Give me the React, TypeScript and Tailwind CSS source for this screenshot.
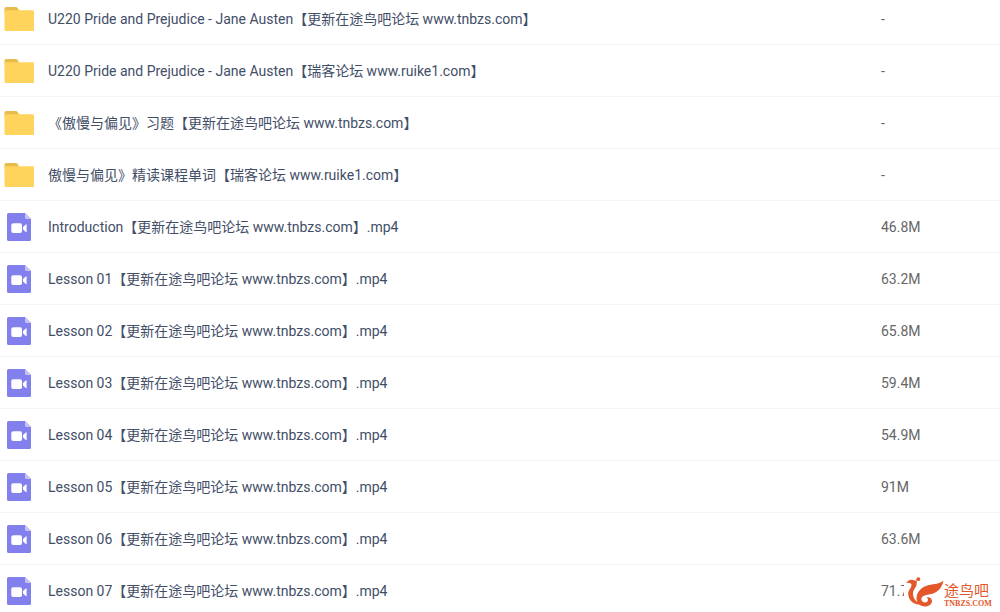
import React from 'react';

interface FileItem {
  name: string;
  size: string;
  type: 'folder' | 'video';
}

const files: FileItem[] = [
  { name: 'U220 Pride and Prejudice - Jane Austen【更新在途鸟吧论坛 www.tnbzs.com】', size: '-', type: 'folder' },
  { name: 'U220 Pride and Prejudice - Jane Austen【瑞客论坛 www.ruike1.com】', size: '-', type: 'folder' },
  { name: '《傲慢与偏见》习题【更新在途鸟吧论坛 www.tnbzs.com】', size: '-', type: 'folder' },
  { name: '傲慢与偏见》精读课程单词【瑞客论坛 www.ruike1.com】', size: '-', type: 'folder' },
  { name: 'Introduction【更新在途鸟吧论坛 www.tnbzs.com】.mp4', size: '46.8M', type: 'video' },
  { name: 'Lesson 01【更新在途鸟吧论坛 www.tnbzs.com】.mp4', size: '63.2M', type: 'video' },
  { name: 'Lesson 02【更新在途鸟吧论坛 www.tnbzs.com】.mp4', size: '65.8M', type: 'video' },
  { name: 'Lesson 03【更新在途鸟吧论坛 www.tnbzs.com】.mp4', size: '59.4M', type: 'video' },
  { name: 'Lesson 04【更新在途鸟吧论坛 www.tnbzs.com】.mp4', size: '54.9M', type: 'video' },
  { name: 'Lesson 05【更新在途鸟吧论坛 www.tnbzs.com】.mp4', size: '91M', type: 'video' },
  { name: 'Lesson 06【更新在途鸟吧论坛 www.tnbzs.com】.mp4', size: '63.6M', type: 'video' },
  { name: 'Lesson 07【更新在途鸟吧论坛 www.tnbzs.com】.mp4', size: '71.7M', type: 'video' },
];

const FolderIcon = () => (
  <svg className="w-[30px] h-[30px]" viewBox="0 0 30 30" aria-hidden="true">
    <path d="M.5 9V4.500A1.500 1.500 0 0 1 2 3H12a1.500 1.500 0 0 1 1.200.6L15 6v3z" fill="#e6bd4c" />
    <path d="M.5 7.500A1.200 1.200 0 0 1 1.700 6.300h27A1.500 1.500 0 0 1 30.200 7.800v17.700a1.500 1.500 0 0 1-1.500 1.500H2A1.500 1.500 0 0 1 .5 25.500z" fill="#ffd45c" />
  </svg>
);

const VideoIcon = () => (
  <svg className="w-[30px] h-[30px]" viewBox="0 0 30 30" aria-hidden="true">
    <path d="M4.500 1H21l6 6v20.500a1.500 1.500 0 0 1-1.500 1.500h-21A1.500 1.500 0 0 1 3 27.500v-25A1.500 1.500 0 0 1 4.500 1z" fill="#8280ed" />
    <path d="M21 1l6 6h-4.500A1.500 1.500 0 0 1 21 5.500z" fill="#c4c2fa" />
    <rect x="7.300" y="11.300" width="10.700" height="9.700" rx="2" fill="#fff" />
    <path d="M19 15l2.800-2.600q.8-.5.8.4v6.800q0 .9-.8.4L19 17.400z" fill="#fff" />
  </svg>
);

const BirdLogo = () => (
  <svg className="w-10 h-8" viewBox="0 0 40 32" fill="#e4572b" aria-hidden="true">
    <circle cx="14.300" cy="3.200" r="1.900" />
    <path d="M1.500 7C3.500 6 5 3.500 8 3.800c2 .2 3 1.200 5 .7-.5 2 0 3.500-.8 5.500C11 12.500 9 14 9 17.500c0 5 3 9 8.500 10.300C13 30 4.500 26 4.200 18c-.1-4 2.800-5.500 3.300-8.500C7.800 7 5 6.500 1.500 7z" />
    <path d="M39.500 4.500C38 12.500 33 17 26 18.300c-5 .9-8 1.700-8.500 4-.4 2.300 1 4.200 3.300 4.200 2 0 3.200-1.200 3.200-2.700 0-1-.6-1.600-1.600-1.800 1.800-1.700 5.600-.3 5.600 3 0 3-3 5.500-7 5.500-4.700 0-8.500-3.300-8.500-8.200C12.500 15.500 18 10.500 25 9c5.500-1.100 10.500-1 14.500-4.500z" />
  </svg>
);

const Watermark = () => (
  <div className="absolute right-0 bottom-0 flex items-end bg-white pr-2 pb-1 w-24 h-9 text-[#e4572b]">
    <BirdLogo />
    <div className="flex flex-col">
      <span className="font-['Noto_Sans_CJK_SC',sans-serif] text-[15px] leading-5 whitespace-nowrap">途鸟吧</span>
      <span className="font-['Liberation_Serif',serif] text-[8px] leading-2 font-bold">TNBZS.COM</span>
    </div>
  </div>
);

const App: React.FC = () => {
  return (
    <main className="relative h-screen overflow-hidden bg-white font-['Roboto','Noto_Sans_CJK_SC',sans-serif] text-sm">
      <table className="-mt-[7px] w-full table-fixed border-separate border-spacing-0">
        <tbody>
          {files.map((file) => (
            <tr key={file.name} className="h-[52px]">
              <td className="border-b border-[#f5f5f6] p-0">
                <div className="flex items-center gap-3.5 pl-1">
                  {file.type === 'folder' ? <FolderIcon /> : <VideoIcon />}
                  <span className="leading-5 whitespace-nowrap text-[#424e67]">{file.name}</span>
                </div>
              </td>
              <td className="w-[119px] border-b border-[#f5f5f6] p-0 text-[#666]">{file.size}</td>
            </tr>
          ))}
        </tbody>
      </table>

      {/* Site watermark over the last row */}
      <Watermark />
    </main>
  );
};

export default App;
